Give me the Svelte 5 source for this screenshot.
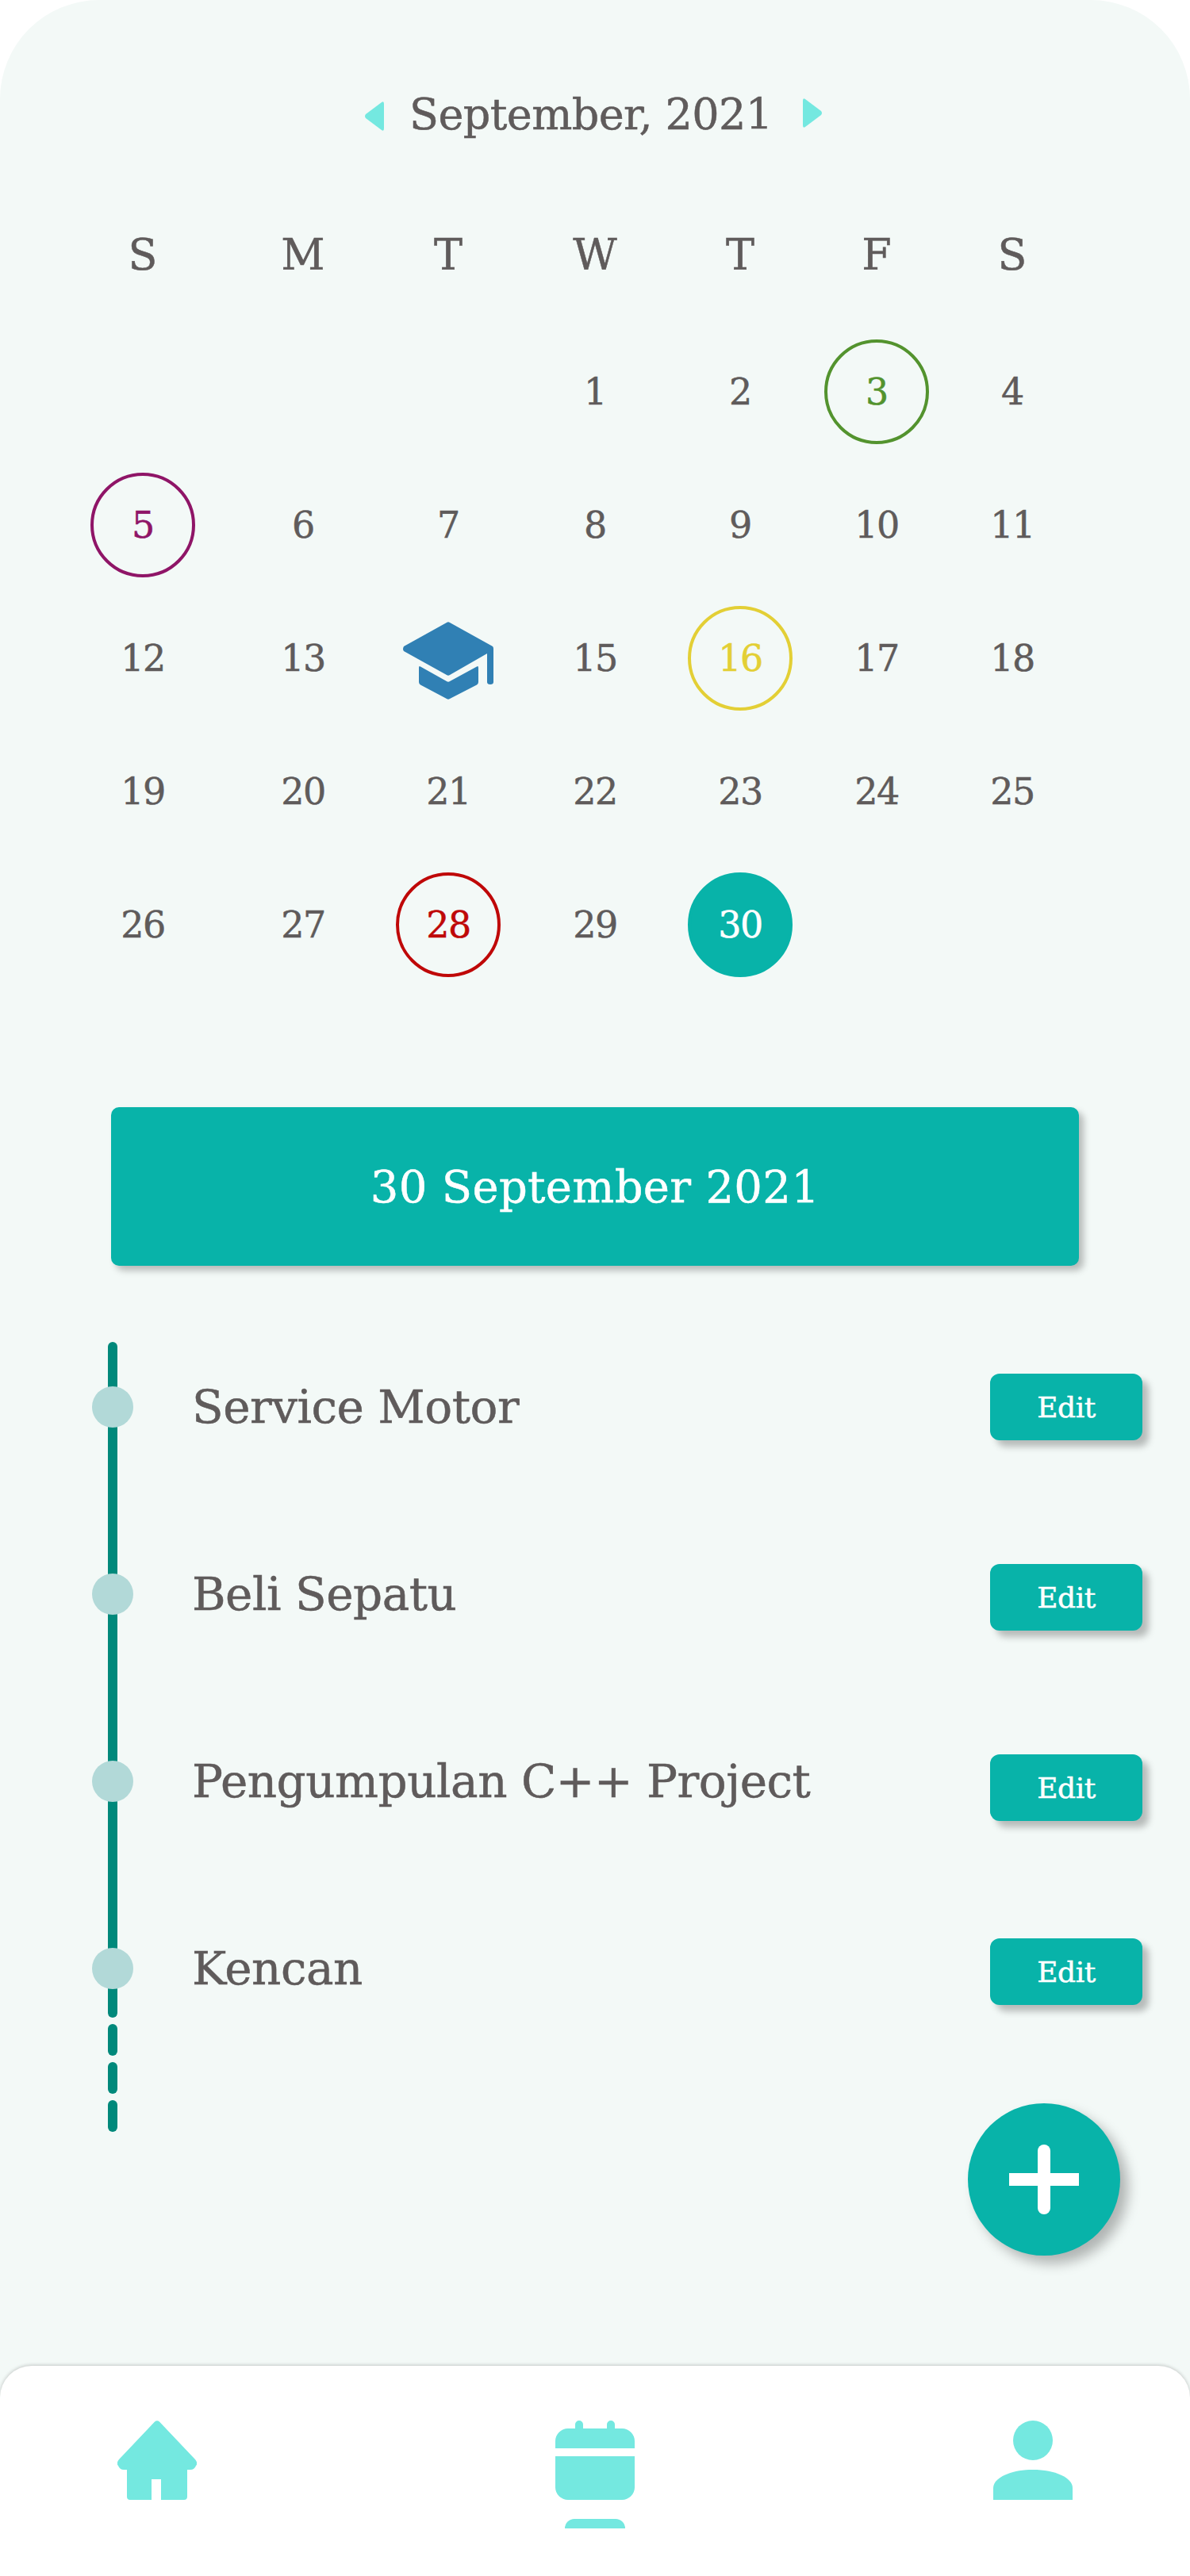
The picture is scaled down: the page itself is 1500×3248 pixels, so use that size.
<script lang="ts">
  const weekdays = ["S", "M", "T", "W", "T", "F", "S"];

  // leading blanks + days, mark = ring colour / special cell
  const days: { n: number | null; mark?: string }[] = [
    { n: null }, { n: null }, { n: null },
    { n: 1 }, { n: 2 }, { n: 3, mark: "green" }, { n: 4 },
    { n: 5, mark: "purple" }, { n: 6 }, { n: 7 }, { n: 8 }, { n: 9 }, { n: 10 }, { n: 11 },
    { n: 12 }, { n: 13 }, { n: 14, mark: "hat" }, { n: 15 }, { n: 16, mark: "yellow" }, { n: 17 }, { n: 18 },
    { n: 19 }, { n: 20 }, { n: 21 }, { n: 22 }, { n: 23 }, { n: 24 }, { n: 25 },
    { n: 26 }, { n: 27 }, { n: 28, mark: "red" }, { n: 29 }, { n: 30, mark: "today" },
  ];

  const tasks = [
    { title: "Service Motor", shift: 0 },
    { title: "Beli Sepatu", shift: 4 },
    { title: "Pengumpulan C++ Project", shift: 8 },
    { title: "Kencan", shift: 4 },
  ];
</script>

<div class="screen">
  <header class="month">
    <svg class="arrow left" width="24" height="37" viewBox="0 0 24 37" aria-hidden="true">
      <path d="M21 1 Q24 -1 24 3 V34 Q24 38 21 36 L1 21 Q-1 18.5 1 16 Z" />
    </svg>
    <h1>September, 2021</h1>
    <svg class="arrow right" width="24" height="37" viewBox="0 0 24 37" aria-hidden="true">
      <path d="M3 1 Q0 -1 0 3 V34 Q0 38 3 36 L23 21 Q25 18.5 23 16 Z" />
    </svg>
  </header>

  <div class="cal weekdays">
    {#each weekdays as d}
      <span>{d}</span>
    {/each}
  </div>

  <div class="cal dates">
    {#each days as day}
      <div class="cell">
        {#if day.mark === "hat"}
          <svg class="hat" width="114" height="98" viewBox="0 0 114 98" aria-label="14">
            <path d="M55 1 Q57 -0.5 59 1 L113 31 Q114 32 114 34 V76 Q114 79 110 79 Q106 79 106 76 V40 L59 67 Q57 68.5 55 67 L1 37 Q-1 34.5 1 31 Z" />
            <path d="M20 58 Q20 55 22 56.5 L55 75 Q57 76.5 59 75 L93 56.5 Q95 55 95 58 V76 Q95 78 93 79.5 L59 97 Q57 98.5 55 97 L22 79.5 Q20 78 20 76 Z" />
          </svg>
        {:else if day.mark}
          <span class="ring {day.mark}">{day.n}</span>
        {:else if day.n}
          <span>{day.n}</span>
        {/if}
      </div>
    {/each}
  </div>

  <div class="banner">30 September 2021</div>

  <section class="timeline">
    <div class="rail">
      <i class="solid"></i>
      <i></i>
      <i></i>
      <i></i>
    </div>
    {#each tasks as task}
      <div class="task">
        <span class="dot"></span>
        <span class="title">{task.title}</span>
        <button class="edit" style="transform: translateY({task.shift}px)">Edit</button>
      </div>
    {/each}
  </section>

  <button class="fab" aria-label="Add">
    <svg width="88" height="88" viewBox="0 0 88 88" aria-hidden="true">
      <rect x="36" y="0" width="16" height="88" rx="8" />
      <rect x="0" y="36" width="88" height="16" />
    </svg>
  </button>

  <nav class="tabbar">
    <svg width="100" height="100" viewBox="0 0 100 100" aria-label="Home">
      <path d="M47 1.5 Q50 -1 53 1.5 L98 49 Q102 54 99 57 Q97 62 92 62 H88 V96 Q88 100 84 100 H55 V74 H43 V100 H16 Q12 100 12 96 V62 H8 Q3 62 1 57 Q-2 54 2 49 Z" />
    </svg>
    <svg width="100" height="136" viewBox="0 0 100 136" aria-label="Calendar">
      <path d="M25 10 V5 A5 5 0 0 1 35 5 V10 H65 V5 A5 5 0 0 1 75 5 V10 H84 A16 16 0 0 1 100 26 V35 H0 V26 A16 16 0 0 1 16 10 Z" />
      <path d="M0 45 H100 V84 A16 16 0 0 1 84 100 H16 A16 16 0 0 1 0 84 Z" />
      <path d="M12 136 A12 12 0 0 1 24 124 H76 A12 12 0 0 1 88 136 Z" />
    </svg>
    <svg width="100" height="100" viewBox="0 0 100 100" aria-label="Profile">
      <circle cx="50" cy="25" r="25" />
      <path d="M0 100 V85 C0 72 22 62 50 62 C78 62 100 72 100 85 V100 Z" />
    </svg>
  </nav>
</div>

<style>
  :global(body) {
    margin: 0;
    background: #fff;
  }

  .screen {
    position: relative;
    display: flex;
    flex-direction: column;
    width: 1500px;
    height: 3248px;
    box-sizing: border-box;
    padding-top: 104px;
    border-radius: 125px 125px 0 0;
    background: #f3f9f7;
    color: #5f5b5b;
    font-family: "DejaVu Serif", "Liberation Serif", serif;
    -webkit-text-stroke: 0.5px currentColor;
    overflow: hidden;
  }

  .month {
    display: flex;
    justify-content: center;
    align-items: center;
    height: 80px;
    padding-right: 4px;
    gap: 32px;
  }

  .month h1 {
    width: 456px;
    margin: 0;
    font-size: 54px;
    font-weight: 400;
    letter-spacing: -0.6px;
    white-space: nowrap;
    text-align: center;
  }

  .arrow {
    flex: none;
  }

  .arrow path {
    fill: #74e8e0;
  }

  .arrow.left {
    transform: translateY(2px);
  }

  .arrow.right {
    margin-left: 8px;
    transform: translateY(-2px);
  }

  /* columns are not equal in the design */
  .cal {
    display: grid;
    grid-template-columns: 202px 202px 164px 206px 160px 184px 158px;
    padding-left: 79px;
    justify-items: center;
    align-items: center;
  }

  .weekdays {
    height: 60px;
    margin-top: 106px;
    font-size: 54px;
  }

  .dates {
    grid-auto-rows: 168px;
    margin-top: 60px;
    font-size: 46px;
    letter-spacing: -1.5px;
  }

  .cell {
    display: flex;
    justify-content: center;
    align-items: center;
  }

  .ring {
    display: flex;
    flex: none;
    justify-content: center;
    align-items: center;
    width: 132px;
    height: 132px;
    box-sizing: border-box;
    border: 4px solid;
    border-radius: 50%;
  }

  .ring.green { color: #53932e; }
  .ring.purple { color: #8f1567; }
  .ring.yellow { color: #e3cf35; }
  .ring.red { color: #bf0808; }

  .ring.today {
    border-color: #08b3a9;
    background: #08b3a9;
    color: #fff;
  }

  .hat {
    transform: translateY(3px);
  }

  .hat path {
    fill: #3080b4;
  }

  .banner {
    display: flex;
    justify-content: center;
    align-items: center;
    width: 1220px;
    height: 200px;
    margin: 146px 0 0 140px;
    border-radius: 10px;
    background: #08b3a9;
    box-shadow: 6px 6px 8px rgba(0, 0, 0, 0.25);
    color: #fff;
    font-size: 56px;
    letter-spacing: 0.3px;
  }

  .timeline {
    position: relative;
    margin-top: 60px;
  }

  .rail {
    position: absolute;
    top: 36px;
    left: 136px;
    display: flex;
    flex-direction: column;
    gap: 8px;
    width: 12px;
  }

  .rail i {
    display: block;
    height: 40px;
    border-radius: 6px;
    background: #00897b;
  }

  .rail i.solid {
    height: 852px;
  }

  .task {
    position: relative;
    display: flex;
    align-items: center;
    height: 236px;
    padding: 0 60px 0 116px;
  }

  .dot {
    width: 52px;
    height: 52px;
    border-radius: 50%;
    background: #b2d9d8;
  }

  .title {
    margin-left: 74px;
    font-size: 58px;
    letter-spacing: -0.5px;
  }

  .edit {
    width: 192px;
    height: 84px;
    margin-left: auto;
    padding: 0;
    border: 0;
    border-radius: 12px;
    background: #08b3a9;
    box-shadow: 8px 8px 8px rgba(0, 0, 0, 0.25);
    color: #fff;
    font-family: inherit;
    font-size: 36px;
    letter-spacing: -0.4px;
  }

  .fab {
    position: absolute;
    top: 2652px;
    left: 1220px;
    display: flex;
    justify-content: center;
    align-items: center;
    width: 192px;
    height: 192px;
    padding: 0;
    border: 0;
    border-radius: 50%;
    background: #08b3a9;
    box-shadow: 10px 10px 16px rgba(0, 0, 0, 0.28);
  }

  .fab svg {
    fill: #fff;
  }

  .tabbar {
    display: flex;
    justify-content: space-between;
    align-items: flex-start;
    box-sizing: border-box;
    height: 265px;
    margin-top: auto;
    padding: 69px 148px 0;
    border-radius: 40px 40px 0 0;
    background: #fff;
    box-shadow: 0 -1px 4px rgba(0, 0, 0, 0.2);
  }

  .tabbar svg {
    fill: #74e8e0;
  }
</style>
